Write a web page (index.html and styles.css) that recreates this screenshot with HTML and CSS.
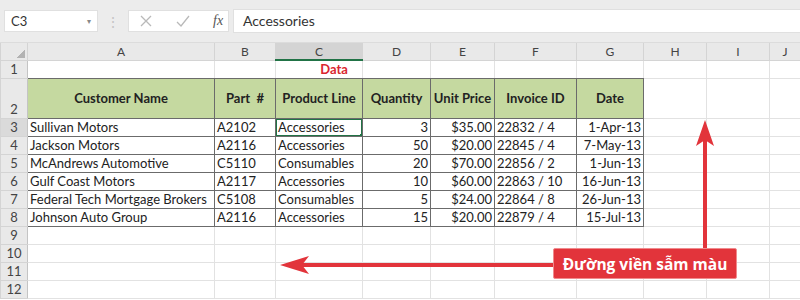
FILE: index.html
```html
<!DOCTYPE html>
<html lang="vi">
<head>
    <meta charset="UTF-8">
    <title>Sheet</title>
    <link rel="stylesheet" href="styles.css">
</head>
<body>
    <div class="formula-bar">
        <div class="name-box">C3<span class="caret">&#9662;</span></div>
        <div class="dots">&#8942;</div>
        <div class="fx-tools">
            <svg width="14" height="14" viewBox="0 0 14 14"><path d="M2 2 L12 12 M12 2 L2 12" stroke="#b9b9b9" stroke-width="1.3" fill="none"/></svg>
            <svg width="16" height="14" viewBox="0 0 16 14"><path d="M2 8 L6 12 L14 2" stroke="#b9b9b9" stroke-width="1.3" fill="none"/></svg>
            <span class="fx">fx</span>
        </div>
        <div class="formula-input">Accessories</div>
    </div>

    <div class="sheet">
        <table class="grid">
            <colgroup>
                <col class="w-rh"><col class="w-a"><col class="w-b"><col class="w-c"><col class="w-d">
                <col class="w-e"><col class="w-f"><col class="w-g"><col class="w-h"><col class="w-i"><col class="w-j">
            </colgroup>
            <tr class="col-heads">
                <th class="corner"></th>
                <th>A</th><th>B</th><th class="active">C</th><th>D</th><th>E</th><th>F</th><th>G</th><th>H</th><th>I</th><th>J</th>
            </tr>
            <tr>
                <th class="rh">1</th>
                <td class="above"></td><td class="above"></td><td class="above title">Data</td><td class="above"></td>
                <td class="above"></td><td class="above"></td><td class="above"></td><td></td><td></td><td></td>
            </tr>
            <tr class="tall">
                <th class="rh">2</th>
                <td class="hd">Customer Name</td><td class="hd">Part &nbsp;#</td><td class="hd">Product Line</td><td class="hd">Quantity</td>
                <td class="hd">Unit Price</td><td class="hd">Invoice ID</td><td class="hd">Date</td><td></td><td></td><td></td>
            </tr>
            <tr>
                <th class="rh rh-active">3</th>
                <td class="dk">Sullivan Motors</td><td class="dk">A2102</td><td class="dk sel">Accessories</td><td class="dk num">3</td>
                <td class="dk num">$35.00</td><td class="dk">22832 / 4</td><td class="dk num">1-Apr-13</td><td></td><td></td><td></td>
            </tr>
            <tr>
                <th class="rh">4</th>
                <td class="dk">Jackson Motors</td><td class="dk">A2116</td><td class="dk">Accessories</td><td class="dk num">50</td>
                <td class="dk num">$20.00</td><td class="dk">22845 / 4</td><td class="dk num">7-May-13</td><td></td><td></td><td></td>
            </tr>
            <tr>
                <th class="rh">5</th>
                <td class="dk">McAndrews Automotive</td><td class="dk">C5110</td><td class="dk">Consumables</td><td class="dk num">20</td>
                <td class="dk num">$70.00</td><td class="dk">22856 / 2</td><td class="dk num">1-Jun-13</td><td></td><td></td><td></td>
            </tr>
            <tr>
                <th class="rh">6</th>
                <td class="dk">Gulf Coast Motors</td><td class="dk">A2117</td><td class="dk">Accessories</td><td class="dk num">10</td>
                <td class="dk num">$60.00</td><td class="dk">22863 / 10</td><td class="dk num">16-Jun-13</td><td></td><td></td><td></td>
            </tr>
            <tr>
                <th class="rh">7</th>
                <td class="dk">Federal Tech Mortgage Brokers</td><td class="dk">C5108</td><td class="dk">Consumables</td><td class="dk num">5</td>
                <td class="dk num">$24.00</td><td class="dk">22864 / 8</td><td class="dk num">26-Jun-13</td><td></td><td></td><td></td>
            </tr>
            <tr>
                <th class="rh">8</th>
                <td class="dk">Johnson Auto Group</td><td class="dk">A2116</td><td class="dk">Accessories</td><td class="dk num">15</td>
                <td class="dk num">$20.00</td><td class="dk">22879 / 4</td><td class="dk num">15-Jul-13</td><td></td><td></td><td></td>
            </tr>
            <tr><th class="rh">9</th><td></td><td></td><td></td><td></td><td></td><td></td><td></td><td></td><td></td><td></td></tr>
            <tr><th class="rh">10</th><td></td><td></td><td></td><td></td><td></td><td></td><td></td><td></td><td></td><td></td></tr>
            <tr><th class="rh">11</th><td></td><td></td><td></td><td></td><td></td><td></td><td></td><td></td><td></td><td></td></tr>
            <tr><th class="rh">12</th><td></td><td></td><td></td><td></td><td></td><td></td><td></td><td></td><td></td><td></td></tr>
        </table>

        <!-- annotation arrows -->
        <svg class="arrows" width="800" height="300" viewBox="0 0 800 300">
            <line x1="300" y1="265" x2="556" y2="265" stroke="#e2343b" stroke-width="4"/>
            <path d="M280 265 L309 256 L302 265 L309 274 Z" fill="#e2343b"/>
            <line x1="705" y1="138" x2="705" y2="250" stroke="#e2343b" stroke-width="4"/>
            <path d="M705 120 L714 146 L705 140 L696 146 Z" fill="#e2343b"/>
        </svg>
        <div class="callout">Đường viền sẫm màu</div>
    </div>
</body>
</html>
```

FILE: styles.css
```css
body {
    margin: 0;
    width: 800px;
    height: 300px;
    overflow: hidden;
    background: #fff;
    font-family: Lato, "Open Sans", Arial, sans-serif;
}

.formula-bar {
    display: flex;
    align-items: center;
    height: 43px;
    padding: 0 0 0 4px;
    box-sizing: border-box;
    background: #ececec;
    border-bottom: 1px solid #dcdcdc;
}
.name-box {
    display: flex;
    justify-content: space-between;
    align-items: center;
    width: 94px;
    height: 22px;
    padding: 0 6px;
    box-sizing: border-box;
    background: #fff;
    border: 1px solid #e0e0e0;
    font-size: 13px;
    color: #333;
}
.caret {
    font-size: 8px;
    color: #888;
}
.dots {
    width: 30px;
    text-align: center;
    color: #c4c4c4;
    font-size: 14px;
}
.fx-tools {
    display: flex;
    align-items: center;
    gap: 22px;
    width: 101px;
    height: 22px;
    padding-left: 10px;
    box-sizing: border-box;
    background: #fff;
    border: 1px solid #e0e0e0;
}
.fx {
    font-family: "Liberation Serif", serif;
    font-style: italic;
    font-size: 14px;
    color: #555;
}
.formula-input {
    flex: 1;
    height: 22px;
    margin-left: 4px;
    padding-left: 9px;
    line-height: 22px;
    background: #fff;
    border: 1px solid #e0e0e0;
    border-right: none;
    font-size: 14px;
    color: #333;
}

.sheet {
    position: relative;
}
.grid {
    table-layout: fixed;
    border-collapse: collapse;
    width: 800px;
    font-size: 13px;
    color: #222;
}
.w-rh { width: 27px; }
.w-a { width: 187px; }
.w-b { width: 61px; }
.w-c { width: 87px; }
.w-d { width: 68px; }
.w-e { width: 64px; }
.w-f { width: 82px; }
.w-g { width: 67px; }
.w-h { width: 63px; }
.w-i { width: 63px; }
.w-j { width: 31px; }

.grid td {
    height: 17px;
    padding: 0 2px;
    border: 1px solid #e2e2e2;
    vertical-align: bottom;
    line-height: 17px;
    white-space: nowrap;
    overflow: hidden;
}
.grid th {
    padding: 0;
    font-weight: normal;
    color: #444;
    background: #e9e9e9;
}
.col-heads th {
    height: 16px;
    font-size: 12px;
    border: 1px solid #d4d4d4;
    border-top: none;
}
.col-heads th.active {
    background: #d4d4d4;
    border-bottom: 2px solid #217346;
}
.corner {
    background: #e9e9e9 linear-gradient(135deg, transparent 60%, #b3b3b3 60%) no-repeat right 2px bottom 2px / 11px 11px !important;
}
.rh {
    font-size: 13px;
    text-align: center;
    vertical-align: bottom;
    line-height: 17px;
    border: 1px solid #d4d4d4;
    border-right-color: #c4c4c4;
}
.rh-active {
    background: #dadada !important;
}

.tall td, .tall th {
    height: 39px;
}
.above {
    border-bottom-color: #6b6b6b !important;
}
.title {
    color: #d9262f;
    font-weight: bold;
    text-align: center;
    padding-left: 32px !important;
}
.hd {
    background: #c5d9a0;
    font-weight: bold;
    text-align: center;
    vertical-align: middle !important;
    border: 1px solid #6b6b6b !important;
}
.dk {
    border: 1px solid #6b6b6b !important;
}
.num {
    text-align: right;
}
.sel {
    position: relative;
    box-shadow: inset 0 0 0 1px #217346;
}
.sel::after {
    content: "";
    position: absolute;
    right: -2px;
    bottom: -2px;
    width: 4px;
    height: 4px;
    background: #217346;
}

.arrows {
    position: absolute;
    left: 0;
    top: -43px;
    pointer-events: none;
}
.callout {
    position: absolute;
    left: 553px;
    top: 205px;
    width: 184px;
    height: 31px;
    line-height: 31px;
    box-sizing: border-box;
    text-align: center;
    background: #e2343b;
    border: 1px solid #f08a8d;
    border-radius: 2px;
    color: #fff;
    font-family: "Open Sans", Arial, sans-serif;
    font-size: 15.5px;
    font-weight: bold;
}
```
